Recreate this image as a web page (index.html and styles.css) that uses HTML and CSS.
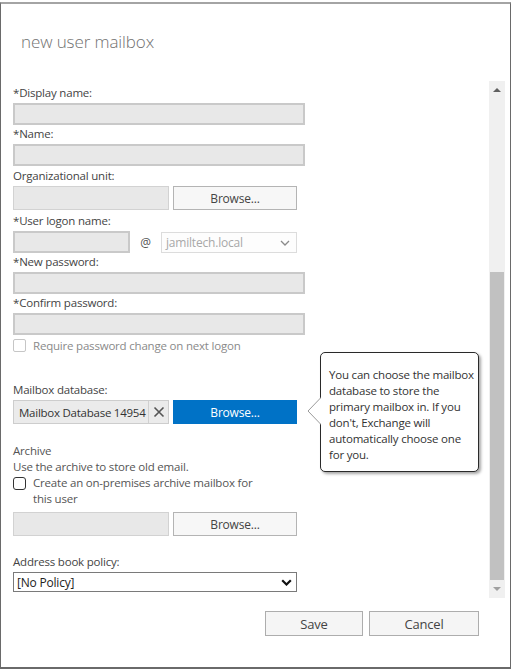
FILE: index.html
```html
<!DOCTYPE html>
<html lang="en">
<head>
<meta charset="utf-8">
<title>new user mailbox</title>
<link rel="stylesheet" href="styles.css">
</head>
<body>
<div class="window">
  <header class="title">new user mailbox</header>
  <div class="main">
    <div class="content">
      <div class="field">
        <div class="label">*Display name:</div>
        <div class="input req wide"></div>
      </div>
      <div class="field g2">
        <div class="label">*Name:</div>
        <div class="input req wide"></div>
      </div>
      <div class="field g3">
        <div class="label">Organizational unit:</div>
        <div class="row">
          <div class="input short"></div>
          <div class="btn">Browse...</div>
        </div>
      </div>
      <div class="field g4">
        <div class="label">*User logon name:</div>
        <div class="row logon">
          <div class="input req logon-input"></div>
          <span class="at">@</span>
          <div class="domain"><span>jamiltech.local</span>
            <svg class="chev" width="10" height="6" viewBox="0 0 10 6"><path d="M1 1 L5 5 L9 1" fill="none" stroke="#8a8a8a" stroke-width="1.3"/></svg>
          </div>
        </div>
      </div>
      <div class="field g5">
        <div class="label">*New password:</div>
        <div class="input req wide"></div>
      </div>
      <div class="field g5">
        <div class="label">*Confirm password:</div>
        <div class="input req wide"></div>
      </div>
      <div class="check disabled">
        <span class="box"></span>
        <span class="check-text">Require password change on next logon</span>
      </div>
      <div class="field g7">
        <div class="label">Mailbox database:</div>
        <div class="row">
          <div class="dbfield">
            <span class="dbname">Mailbox Database 14954</span>
            <span class="clear">
              <svg width="12" height="12" viewBox="0 0 12 12"><path d="M1.5 1.5 L10.5 10.5 M10.5 1.5 L1.5 10.5" stroke="#555" stroke-width="1.6"/></svg>
            </span>
          </div>
          <div class="btn primary">Browse...</div>
        </div>
      </div>
      <div class="archive">
        <div class="line">Archive</div>
        <div class="line">Use the archive to store old email.</div>
        <div class="check active">
          <span class="box"></span>
          <span class="check-text">Create an on-premises archive mailbox for<br>this user</span>
        </div>
      </div>
      <div class="row archive-row">
        <div class="input short"></div>
        <div class="btn">Browse...</div>
      </div>
      <div class="field g8">
        <div class="label">Address book policy:</div>
        <div class="policy">
          <span>[No Policy]</span>
          <svg class="chev" width="11" height="7" viewBox="0 0 11 7"><path d="M1.2 1.2 L5.5 5.5 L9.8 1.2" fill="none" stroke="#111" stroke-width="2.2"/></svg>
        </div>
      </div>
    </div>
    <div class="scrollbar">
      <div class="sb-arrow"><span class="tri up"></span></div>
      <div class="sb-track"><div class="sb-thumb"></div></div>
      <div class="sb-arrow"><span class="tri down"></span></div>
    </div>
  </div>
  <footer class="actions">
    <div class="btn action save">Save</div>
    <div class="btn action cancel">Cancel</div>
  </footer>
  <div class="tooltip">
    <svg class="tip-arrow" width="15" height="28" viewBox="0 0 15 28"><path d="M14 0.5 L1 14 L14 27.5" fill="#fff" stroke="#9a9a9a" stroke-width="1"/><rect x="14" y="0" width="1" height="28" fill="#fff"/></svg>
    You can choose the mailbox database to store the primary mailbox in. If you don't, Exchange will automatically choose one for you.
  </div>
</div>
</body>
</html>
```

FILE: styles.css
```css
* { box-sizing: border-box; }

html, body {
  margin: 0;
  padding: 0;
  background: #fff;
}

body {
  font-family: "Open Sans", "Noto Sans", sans-serif;
  font-size: 11.5px;
  letter-spacing: -0.2px;
  color: #444;
}

.window {
  position: relative;
  margin-top: 2px;
  width: 511px;
  height: 667px;
  border-top: 2px solid #a4a4a4;
  border-left: 1px solid #6a6a6a;
  border-right: 1px solid #6a6a6a;
  border-bottom: 2px solid #6a6a6a;
  display: flex;
  flex-direction: column;
}

.title {
  height: 77px;
  padding: 26px 0 0 20px;
  font-size: 17px;
  font-weight: 300;
  letter-spacing: -0.1px;
  line-height: 24px;
  color: #717171;
}

.main {
  height: 517px;
  display: flex;
}

.content {
  flex: 1;
  padding: 4px 0 0 12px;
}

.label, .line {
  height: 16px;
  line-height: 16px;
  white-space: nowrap;
}

.field > .input,
.field > .row,
.field > .policy { margin-top: 2px; }

.g2 { margin-top: 1px; }
.g3 { margin-top: 2px; }
.g4 { margin-top: 3px; }
.g5 { margin-top: 1px; }
.g7 { margin-top: 28px; }
.g8 { margin-top: 18px; }

.input {
  height: 22px;
  background: #e8e8e8;
  border: 1px solid #d2d2d2;
}
.input.req { border: 2px solid #c9c9c9; }
.input.wide { width: 292px; }
.input.short { width: 156px; height: 24px; }

.row {
  display: flex;
  align-items: center;
  gap: 4px;
}

.btn {
  width: 124px;
  height: 24px;
  display: flex;
  align-items: center;
  justify-content: center;
  background: #f7f7f7;
  border: 1px solid #b4b4b4;
  color: #444;
  font-size: 12px;
}
.btn.primary {
  background: #0072c6;
  border-color: #0072c6;
  color: #fff;
}

.row.logon { gap: 0; height: 22px; }
.logon-input { width: 117px; }
.at {
  width: 31px;
  text-align: center;
  font-size: 12px;
  color: #555;
}
.domain {
  width: 136px;
  height: 21px;
  margin-top: 1px;
  border: 1px solid #dcdcdc;
  background: #fdfdfd;
  color: #a8a8a8;
  font-size: 12px;
  display: flex;
  align-items: center;
  justify-content: space-between;
  padding: 0 6px 0 4px;
}

.check {
  display: flex;
  align-items: flex-start;
  gap: 7px;
  line-height: 16px;
}
.check .box {
  width: 13px;
  height: 13px;
  margin-top: 1px;
  border-radius: 2px;
  background: #fff;
  flex: none;
}
.check.disabled {
  margin-top: 3px;
  color: #8a8a8a;
}
.check.disabled .box { border: 1px solid #c6c6c6; }
.check.active .box { border: 1px solid #333; margin-top: 2px; border-radius: 3px; }

.dbfield {
  width: 156px;
  height: 24px;
  background: #ebebeb;
  border: 1px solid #cdcdcd;
  display: flex;
  align-items: center;
  color: #333;
  font-size: 11.5px;
  letter-spacing: -0.25px;
}
.dbname {
  flex: 1;
  padding-left: 5px;
  white-space: nowrap;
}
.clear {
  width: 20px;
  height: 22px;
  border-left: 1px solid #d0d0d0;
  display: flex;
  align-items: center;
  justify-content: center;
  flex: none;
}

.archive {
  margin-top: 19px;
  color: #555;
}

.archive-row { margin-top: 5px; }

.policy {
  width: 284px;
  height: 20px;
  border: 1px solid #7a7a7a;
  background: #fff;
  color: #222;
  font-size: 12px;
  display: flex;
  align-items: center;
  justify-content: space-between;
  padding: 0 4px 0 3px;
}

.scrollbar {
  width: 16px;
  margin-right: 5px;
  background: #f0f0f0;
  display: flex;
  flex-direction: column;
}
.sb-arrow {
  height: 18px;
  display: flex;
  align-items: center;
  justify-content: center;
}
.sb-track {
  flex: 1;
  display: flex;
  flex-direction: column;
  justify-content: flex-end;
  padding: 0 1px;
}
.sb-thumb {
  height: 308px;
  background: #c1c1c1;
}
.tri {
  width: 0;
  height: 0;
  border-left: 4px solid transparent;
  border-right: 4px solid transparent;
}
.tri.up { border-bottom: 4px solid #606060; }
.tri.down { border-top: 4px solid #a0a0a0; }

.actions {
  flex: 1;
  display: flex;
  justify-content: flex-end;
  align-items: flex-start;
  gap: 6px;
  padding: 13px 31px 0 0;
}
.btn.action {
  height: 25px;
  font-size: 13px;
  border-color: #adadad;
  background: #f5f5f5;
}
.save { width: 98px; }
.cancel { width: 110px; }

.tooltip {
  position: absolute;
  left: 319px;
  top: 348px;
  width: 159px;
  height: 120px;
  padding: 14px 4px 0 8px;
  background: #fff;
  border: 1px solid #2a2a2a;
  border-radius: 5px;
  box-shadow: 2px 2px 3px rgba(0, 0, 0, 0.35);
  line-height: 16px;
  color: #333;
  font-size: 11.5px;
}
.tip-arrow {
  position: absolute;
  left: -14px;
  top: 44px;
}
```
